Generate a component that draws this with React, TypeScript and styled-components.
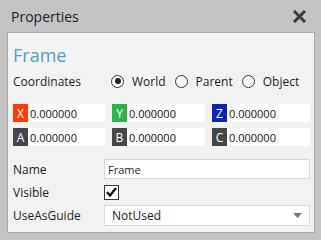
import React from "react";
import styled, { createGlobalStyle } from "styled-components";

const Global = createGlobalStyle`
  html, body { margin: 0; padding: 0; }
  body {
    background: #c3c3c3;
    font-family: "Open Sans", "Noto Sans", sans-serif;
    color: #1e1e1e;
    width: 321px;
    height: 240px;
    overflow: hidden;
  }
`;

const Window = styled.div`
  width: 321px;
  height: 240px;
  display: flex;
  flex-direction: column;
  box-sizing: border-box;
`;

const TitleBar = styled.div`
  height: 32px;
  display: flex;
  align-items: center;
  justify-content: space-between;
  padding: 0 15px 0 11px;
  font-size: 14px;
  color: #222;
`;

const CloseButton = styled.span`
  display: flex;
  align-items: center;
  justify-content: center;
  width: 14px;
  height: 14px;
`;

const Panel = styled.div`
  margin: 0 6px 0 7px;
  height: 201px;
  box-sizing: border-box;
  border: 1px solid #a9a9a9;
  background: #f2f2f2;
  padding: 10px 4px 0 4px;
  display: flex;
  flex-direction: column;
`;

const Heading = styled.div`
  font-size: 18px;
  line-height: 24px;
  color: #4f9fc6;
  padding-left: 1px;
`;

const CoordRow = styled.div`
  margin-top: 4px;
  height: 20px;
  display: flex;
  align-items: center;
  font-size: 12px;
`;

const Label = styled.div<{ $w: number }>`
  width: ${(p) => p.$w}px;
  padding-left: 1px;
  font-size: 12px;
  flex-shrink: 0;
`;

const RadioItem = styled.label`
  display: flex;
  align-items: center;
  gap: 8px;
  margin-right: 9px;
  font-size: 12px;
`;

const RadioCircle = styled.span<{ $on?: boolean }>`
  width: 11px;
  height: 11px;
  border-radius: 50%;
  border: 1px solid #333;
  background: #fff;
  display: flex;
  align-items: center;
  justify-content: center;
  &::after {
    content: "";
    width: 6px;
    height: 6px;
    border-radius: 50%;
    background: ${(p) => (p.$on ? "#222" : "transparent")};
  }
`;

const FieldGrid = styled.div`
  margin-top: 13px;
  display: grid;
  grid-template-columns: 92px 93px 98px;
  column-gap: 7px;
  row-gap: 6px;
  padding-left: 1px;
`;

const Field = styled.div`
  height: 18px;
  display: flex;
  background: #fff;
`;

const Tag = styled.span<{ $bg: string }>`
  width: 15px;
  background: ${(p) => p.$bg};
  color: #fff;
  font-size: 12px;
  display: flex;
  align-items: center;
  justify-content: center;
`;

const Value = styled.span`
  font-size: 11px;
  display: flex;
  align-items: center;
  padding-left: 2px;
  color: #111;
`;

const PropRows = styled.div`
  margin-top: 13px;
  display: grid;
  grid-template-columns: 92px 206px;
  row-gap: 3px;
  align-items: center;
`;

const TextBox = styled.div`
  height: 20px;
  box-sizing: border-box;
  border: 1px solid #d8d8d8;
  background: #fff;
  font-size: 11px;
  display: flex;
  align-items: center;
  padding-left: 3px;
`;

const CheckRow = styled.div`
  height: 20px;
  display: flex;
  align-items: center;
`;

const CheckBox = styled.span`
  width: 13px;
  height: 13px;
  border: 1px solid #333;
  background: #fff;
  display: flex;
  align-items: center;
  justify-content: center;
`;

const Select = styled(TextBox)`
  height: 21px;
  justify-content: space-between;
  padding: 0 7px 0 7px;
  font-size: 12px;
`;

const fields = [
  { t: "X", c: "#ff3c0a" },
  { t: "Y", c: "#2fb24b" },
  { t: "Z", c: "#0c24b4" },
  { t: "A", c: "#464646" },
  { t: "B", c: "#464646" },
  { t: "C", c: "#464646" },
];

export default function App() {
  return (
    <Window>
      <Global />
      <TitleBar>
        <span>Properties</span>
        <CloseButton>
          <svg width="13" height="13" viewBox="0 0 13 13">
            <path d="M2 2 L11 11 M11 2 L2 11" stroke="#3a3a3a" strokeWidth="3" strokeLinecap="square" />
          </svg>
        </CloseButton>
      </TitleBar>
      <Panel>
        <Heading>Frame</Heading>
        <CoordRow>
          <Label $w={98}>Coordinates</Label>
          <RadioItem>
            <RadioCircle $on />
            World
          </RadioItem>
          <RadioItem>
            <RadioCircle />
            Parent
          </RadioItem>
          <RadioItem>
            <RadioCircle />
            Object
          </RadioItem>
        </CoordRow>
        <FieldGrid>
          {fields.map((f) => (
            <Field key={f.t}>
              <Tag $bg={f.c}>{f.t}</Tag>
              <Value>0.000000</Value>
            </Field>
          ))}
        </FieldGrid>
        <PropRows>
          <Label $w={92}>Name</Label>
          <TextBox>Frame</TextBox>
          <Label $w={92}>Visible</Label>
          <CheckRow>
            <CheckBox>
              <svg width="11" height="10" viewBox="0 0 11 10">
                <path d="M1 5 L4 8.5 L10 1" stroke="#111" strokeWidth="2.4" fill="none" />
              </svg>
            </CheckBox>
          </CheckRow>
          <Label $w={92}>UseAsGuide</Label>
          <Select>
            <span>NotUsed</span>
            <svg width="9" height="5" viewBox="0 0 9 5">
              <path d="M0 0 L9 0 L4.5 5 Z" fill="#7a7a7a" />
            </svg>
          </Select>
        </PropRows>
      </Panel>
    </Window>
  );
}
